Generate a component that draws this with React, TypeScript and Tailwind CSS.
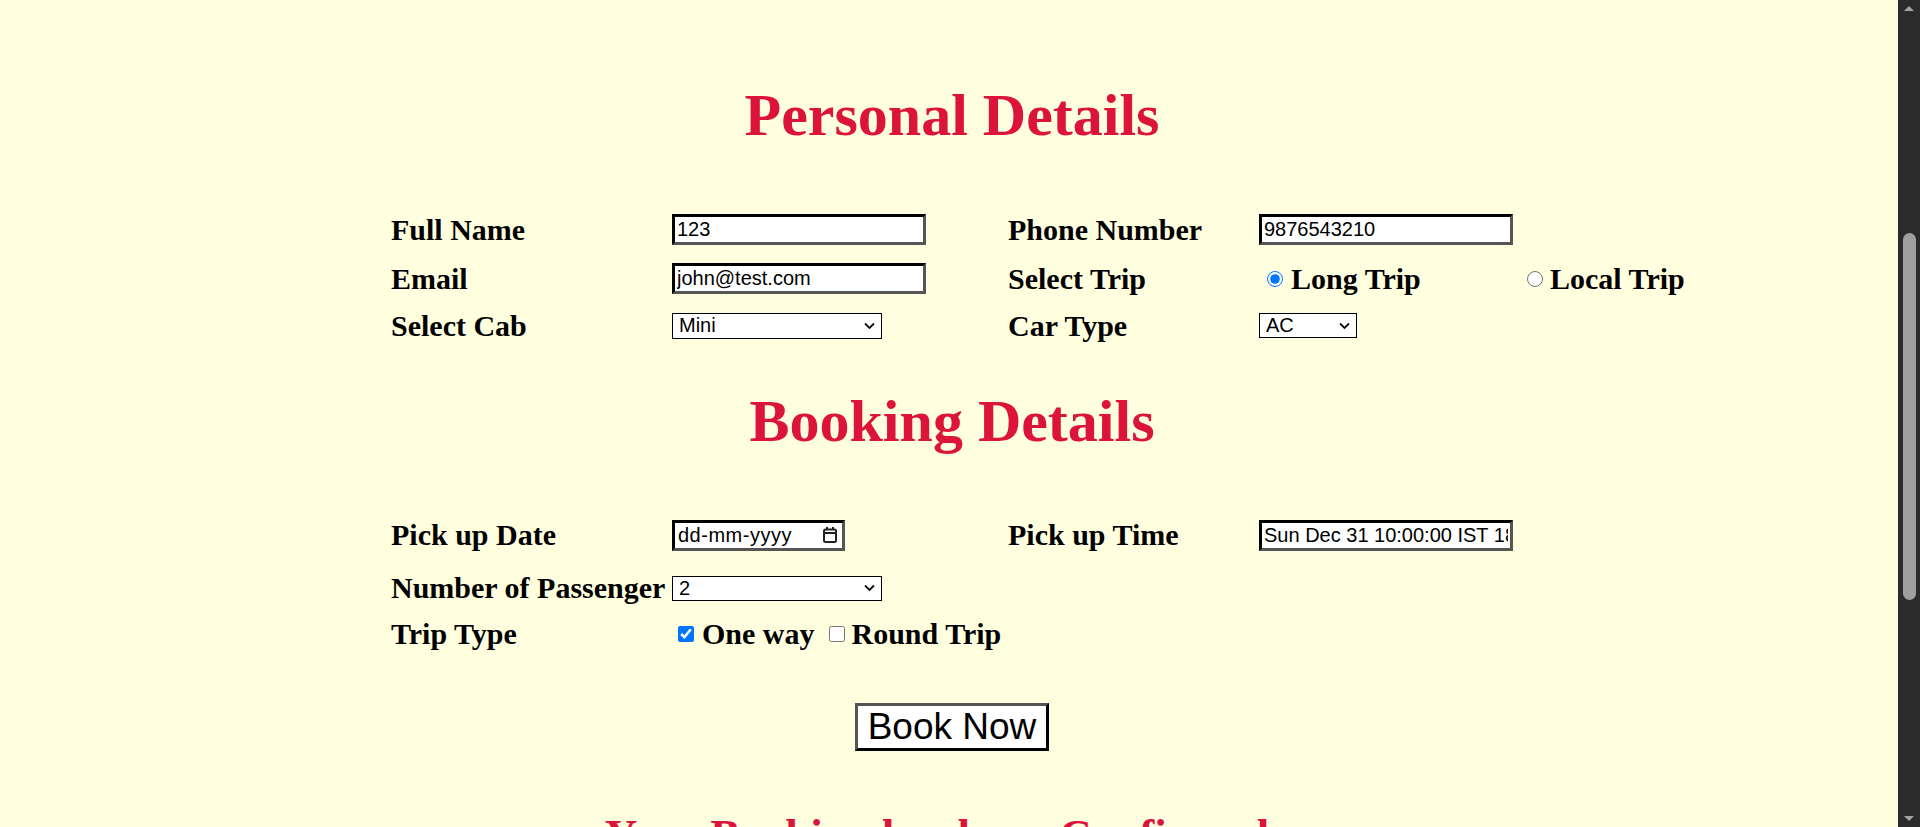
import React from "react";

const label = "text-[30px] leading-[34px] font-bold text-black whitespace-nowrap";
const field =
	"h-[31px] bg-white text-black text-[20px] leading-[23px] px-[2px] border-[3px] border-t-black border-l-black border-b-[#555] border-r-[#555] font-['Liberation_Sans',Arial,sans-serif]";
const cols = "grid grid-cols-[281px_336px_251px_262px_auto] items-center ml-[385px]";

const Heading = ({ children }: { children: React.ReactNode }) => (
	<h1 className="text-center text-[60px] leading-[69px] font-bold text-[#dc143c]">{children}</h1>
);

const Select = ({ w, h, value, options }: { w: string; h: string; value: string; options: string[] }) => (
	<div className={`relative ${w} ${h}`}>
		<select
			className="appearance-none w-full h-full bg-white text-black text-[20px] leading-[23px] border border-black pl-[6px] font-['Liberation_Sans',Arial,sans-serif]"
			defaultValue={value}
		>
			{options.map((o) => (
				<option key={o}>{o}</option>
			))}
		</select>
		<svg
			className="absolute right-[7px] top-1/2 -translate-y-1/2 pointer-events-none"
			width="11"
			height="7"
			viewBox="0 0 11 7"
			fill="none"
			stroke="#111"
			strokeWidth="1.8"
		>
			<path d="M1 1l4.5 4.5L10 1" />
		</svg>
	</div>
);

const Scrollbar = () => (
	<div className="w-[22px] shrink-0 bg-[#2b2b2b] flex flex-col items-center">
		<div className="h-[17px] flex items-center justify-center">
			<div className="w-0 h-0 border-l-[5px] border-r-[5px] border-b-[5px] border-l-transparent border-r-transparent border-b-[#a3a3a3]" />
		</div>
		<div className="h-[216px]" />
		<div className="w-[13px] h-[367px] rounded-full bg-[#9f9f9f]" />
		<div className="flex-1" />
		<div className="h-[17px] flex items-center justify-center">
			<div className="w-0 h-0 border-l-[5px] border-r-[5px] border-t-[5px] border-l-transparent border-r-transparent border-t-[#a3a3a3]" />
		</div>
	</div>
);

const DateField = () => (
	<div className={`${field} w-[173px] h-[30px] flex items-center pl-[3px] pr-[4px]`}>
		<span className="flex-1 tracking-[0.5px]">dd-mm-yyyy</span>
		<svg width="16" height="18" viewBox="0 0 16 18" fill="none" stroke="#222" strokeWidth="2">
			<rect x="2" y="3.5" width="12" height="12.5" rx="1.5" />
			<line x1="2" y1="7" x2="14" y2="7" />
			<line x1="5" y1="1" x2="5" y2="4" />
			<line x1="11" y1="1" x2="11" y2="4" />
		</svg>
	</div>
);

const App = () => {
	return (
		<div className="flex h-[827px] overflow-hidden bg-[#ffffe0] font-['Liberation_Serif','Times_New_Roman',serif]">
			<main className="flex-1 flex flex-col pl-[6px] pt-[81px]">
				<Heading>Personal Details</Heading>

				<div className={`${cols} mt-[55px] grid-rows-[49px_49px_45px]`}>
					<span className={label}>Full Name</span>
					<input className={`${field} w-[254px]`} type="text" defaultValue="123" />
					<span className={label}>Phone Number</span>
					<input className={`${field} w-[254px]`} type="text" defaultValue="9876543210" />
					<span />

					<span className={label}>Email</span>
					<input className={`${field} w-[254px]`} type="email" defaultValue="john@test.com" />
					<span className={label}>Select Trip</span>
					<label className="flex items-center">
						<input type="radio" name="trip" defaultChecked className="w-4 h-4 ml-[8px] mr-[8px]" />
						<span className={label}>Long Trip</span>
					</label>
					<label className="flex items-center">
						<input type="radio" name="trip" className="w-4 h-4 ml-[6px] mr-[7px]" />
						<span className={label}>Local Trip</span>
					</label>

					<span className={label}>Select Cab</span>
					<Select w="w-[210px]" h="h-[26px]" value="Mini" options={["Mini", "Micro", "Sedan", "SUV"]} />
					<span className={label}>Car Type</span>
					<Select w="w-[98px]" h="h-[25px]" value="AC" options={["AC", "Non AC"]} />
					<span />
				</div>

				<div className="mt-[39px]">
					<Heading>Booking Details</Heading>
				</div>

				<div className={`${cols} mt-[54px] grid-rows-[50px_56px_36px]`}>
					<span className={label}>Pick up Date</span>
					<DateField />
					<span className={label}>Pick up Time</span>
					<input
						className={`${field} w-[254px] h-[30px]`}
						type="text"
						defaultValue="Sun Dec 31 10:00:00 IST 1899"
					/>
					<span />

					<span className={label}>Number of Passenger</span>
					<Select w="w-[210px]" h="h-[25px]" value="2" options={["1", "2", "3", "4", "5", "6"]} />
					<span />
					<span />
					<span />

					<span className={label}>Trip Type</span>
					<div className="flex items-center">
						<input type="checkbox" defaultChecked className="w-4 h-4 ml-[6px] mr-[8px]" />
						<span className={label}>One way</span>
						<input type="checkbox" className="w-4 h-4 ml-[14px] mr-[7px]" />
						<span className={label}>Round Trip</span>
					</div>
				</div>

				<button className="self-center mt-[51px] w-[194px] h-[50px] bg-white text-black text-[37px] leading-[42px] border-[3px] border-t-[#555] border-l-[#555] border-b-black border-r-black font-['Liberation_Sans',Arial,sans-serif]">
					Book Now
				</button>

				<h1 className="mt-[58px] pr-[30px] text-center text-[45px] leading-[52px] font-bold text-[#dc143c]">
					Your Booking has been Confirmed
				</h1>
			</main>
			<Scrollbar />
		</div>
	);
};

export default App;
